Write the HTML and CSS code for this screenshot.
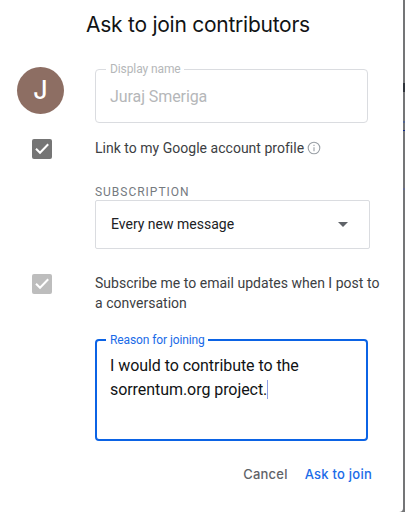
FILE: index.html
```html
<!DOCTYPE html>
<html lang="en">
<head>
<meta charset="utf-8">
<title>Ask to join contributors</title>
<link rel="stylesheet" href="styles.css">
</head>
<body>
<main class="dialog">
  <h1 class="title"><span>Ask to join contributors</span></h1>
  <div class="row row-name">
    <div class="side"><div class="avatar"><span>J</span></div></div>
    <fieldset class="field field-name">
      <legend><span>Display name</span></legend>
      <div class="name-value"><span>Juraj Smeriga</span></div>
    </fieldset>
  </div>
  <div class="row row-link">
    <div class="side side-check">
      <svg class="check" viewBox="0 0 20 20"><rect width="20" height="20" rx="2"/><path d="M4 9.8 8 13.8 16.2 5.2"/></svg>
    </div>
    <div class="label link-label"><span>Link to my Google account profile</span>
      <svg class="info" viewBox="0 0 14 14"><circle cx="7" cy="7" r="5.8"/><path d="M7 6.3v4M7 3.7v1.3"/></svg>
    </div>
  </div>
  <div class="subscription">
    <div class="caption"><span>SUBSCRIPTION</span></div>
    <div class="select"><span>Every new message</span><i class="arrow"></i></div>
  </div>
  <div class="row row-updates">
    <div class="side side-check">
      <svg class="check disabled" viewBox="0 0 20 20"><rect width="20" height="20" rx="2"/><path d="M4 9.8 8 13.8 16.2 5.2"/></svg>
    </div>
    <div class="label updates-label"><span>Subscribe me to email updates when I post to</span><br><span>a conversation</span></div>
  </div>
  <fieldset class="field field-reason">
    <legend><span>Reason for joining</span></legend>
    <div class="reason"><span>I would to contribute to the</span><br><span>sorrentum.org project.</span><i class="caret"></i></div>
  </fieldset>
  <div class="actions"><span class="cancel">Cancel</span><span class="submit">Ask to join</span></div>
</main>
<aside class="backdrop"></aside>
</body>
</html>
```
FILE: styles.css
```css
* { box-sizing: border-box; }
body {
  margin: 0;
  width: 405px;
  height: 512px;
  display: flex;
  overflow: hidden;
  background: #747577;
  font-family: Roboto, "Liberation Sans", sans-serif;
  color: #3c4043;
}
.dialog {
  width: 403px;
  height: 512px;
  background: #fff;
  border-bottom-right-radius: 4px;
}
.backdrop {
  flex: 1;
  background: linear-gradient(#747577 83px, #30353c 83px, #30353c 92px, #747577 92px, #747577 121px, #53658e 121px, #53658e 123px, #747577 123px, #747577 130px, #102a88 130px, #102a88 131px, #747577 131px, #747577 188px, #666d91 188px, #666d91 190px, #747577 190px);
}
.title {
  margin: 0;
  height: 62px;
  padding: 9px 0 0 86px;
  font: 400 21px/31px Inter, sans-serif;
  letter-spacing: -0.25px;
  color: #111315;
  white-space: nowrap;
}
.row { display: flex; }
.side { width: 95px; flex: none; }
.avatar {
  width: 47px;
  height: 47px;
  margin: 5px 0 0 17px;
  border-radius: 50%;
  background: #8d6e63;
  color: #fff;
  display: flex;
  align-items: center;
  justify-content: center;
  font: 500 25px/47px Inter, sans-serif;
}
.field {
  margin: 0;
  min-width: 0;
  padding: 0 0 0 14px;
  border-radius: 4px;
  white-space: nowrap;
}
.field legend {
  height: 14px;
  padding: 0 3px 0 4px;
  margin-left: -4px;
  font-size: 12px;
  line-height: 14px;
  letter-spacing: -0.1px;
}
.row-name { height: 77px; }
.field-name {
  width: 273px;
  height: 61px;
  border: 1px solid #dadce0;
}
.field-name legend { color: #b5b7b9; }
.name-value {
  margin-top: 11px;
  font-size: 16px;
  line-height: 20px;
  letter-spacing: -0.08px;
  color: #b5b7b9;
}
.row-link { height: 46px; }
.side-check { padding-left: 32px; }
.check { display: block; width: 20px; height: 20px; fill: #757575; }
.check path { fill: none; stroke: #fff; stroke-width: 2; }
.check.disabled { fill: #bdbdbd; }
.label { font-size: 14px; line-height: 19.5px; letter-spacing: .02px; white-space: nowrap; }
.link-label { display: flex; height: 20px; }
.link-label span { line-height: 18px; }
.info { width: 14px; height: 14px; margin: 2px 0 0 3px; fill: none; stroke: #9aa0a6; stroke-width: 1.1; }
.subscription { margin-left: 95px; }
.caption { height: 15px; font-size: 12px; line-height: 14px; letter-spacing: .98px; color: #757a7f; }
.select {
  width: 275px;
  height: 49px;
  padding: 0 21px 2px 15px;
  display: flex;
  align-items: center;
  justify-content: space-between;
  border: 1px solid #dadce0;
  border-radius: 2px;
  font-size: 14px;
  color: #202124;
}
.arrow { margin-top: 2px; border: 5px solid transparent; border-top-color: #5f6368; border-bottom: 0; }
.row-updates { margin-top: 25px; height: 59px; }
.field-reason {
  width: 273px;
  height: 108px;
  margin-left: 95px;
  padding-left: 13px;
  border: 2px solid #0b63e5;
}
.field-reason legend { color: #1a6be8; }
.reason {
  margin-top: 7px;
  font-size: 16px;
  line-height: 24px;
  letter-spacing: -0.06px;
  color: #111315;
}
.caret { display: inline-block; width: 1px; height: 19px; vertical-align: -4px; background: #8f9fe8; }
.actions {
  display: flex;
  justify-content: flex-end;
  gap: 17px;
  margin-top: 23px;
  padding-right: 31px;
  font: 500 13px/20px Inter, sans-serif;
  letter-spacing: .23px;
}
.cancel { color: #5f6368; }
.submit { color: #1a6be8; }
```
